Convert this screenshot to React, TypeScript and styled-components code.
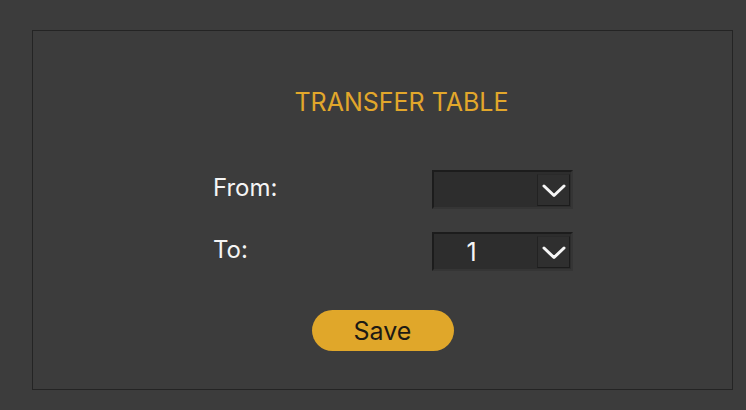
import styled, { createGlobalStyle } from "styled-components";

const GlobalStyle = createGlobalStyle`
  html, body {
    margin: 0;
    padding: 0;
    background: #3c3c3c;
    font-family: Inter, "Noto Sans", "Liberation Sans", sans-serif;
  }
`;

function Chevron() {
  return (
    <svg width="24" height="14" viewBox="0 0 24 14" fill="none">
      <path d="M2 2 L12 11.5 L22 2" stroke="#f6f6f6" strokeWidth="3" strokeLinecap="round" strokeLinejoin="round" />
    </svg>
  );
}

function Select({ value }: { value?: string }) {
  return (
    <SelectBox>
      <SelectValue>{value}</SelectValue>
      <ArrowButton>
        <Chevron />
      </ArrowButton>
    </SelectBox>
  );
}

export default function App() {
  return (
    <>
      <GlobalStyle />
      <Page>
        <Panel>
          <Title>TRANSFER TABLE</Title>
          <Form>
            <Label>From:</Label>
            <Select />
            <Label>To:</Label>
            <Select value="1" />
          </Form>
          <SaveButton>Save</SaveButton>
        </Panel>
      </Page>
    </>
  );
}

const Page = styled.div`
  width: 746px;
  height: 410px;
  padding: 30px 0 0 32px;
  box-sizing: border-box;
`;

const Panel = styled.div`
  width: 701px;
  height: 360px;
  box-sizing: border-box;
  border: 1px solid #242424;
  display: flex;
  flex-direction: column;
  align-items: center;
`;

const Title = styled.h1`
  margin: 56px 0 0 38px;
  font-size: 25px;
  font-weight: 400;
  color: #e2a72b;
  line-height: 30px;
`;

const Form = styled.div`
  align-self: flex-start;
  margin: 53px 0 0 180px;
  display: grid;
  grid-template-columns: 219px 141px;
  row-gap: 23px;
  align-items: center;
`;

const Label = styled.div`
  color: #f5f5f5;
  font-size: 24px;
  line-height: 29px;
  padding-bottom: 5px;
`;

const SelectBox = styled.div`
  width: 141px;
  height: 39px;
  box-sizing: border-box;
  background: #2d2d2d;
  border-top: 2px solid #1c1c1c;
  border-left: 2px solid #1c1c1c;
  border-right: 2px solid #353535;
  border-bottom: 2px solid #353535;
  display: flex;
  align-items: center;
  padding-right: 1px;
`;

const SelectValue = styled.div`
  flex: 1;
  color: #f5f5f5;
  font-size: 25px;
  padding-right: 28px;
  text-align: center;
`;

const ArrowButton = styled.div`
  width: 33px;
  height: 32px;
  box-sizing: border-box;
  border: 1px solid #1c1c1c;
  border-top-color: #2a2a2a;
  border-left-color: #222;
  background: #2f2f2f;
  display: flex;
  align-items: center;
  justify-content: center;
  padding-top: 2px;
`;

const SaveButton = styled.button`
  margin-top: 39px;
  width: 142px;
  height: 41px;
  border: none;
  border-radius: 21px;
  background: #e0a72a;
  color: #1d1a14;
  font-family: Inter, "Noto Sans", "Liberation Sans", sans-serif;
  font-size: 25px;
  padding: 0;
`;
